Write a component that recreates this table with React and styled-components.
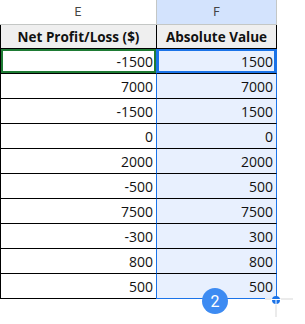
import React from 'react';
import styled, { createGlobalStyle } from 'styled-components';

const rows = [
  [-1500, 1500],
  [7000, 7000],
  [-1500, 1500],
  [0, 0],
  [2000, 2000],
  [-500, 500],
  [7500, 7500],
  [-300, 300],
  [800, 800],
  [500, 500],
];

const Global = createGlobalStyle`
  body {
    margin: 0;
    background: #fff;
  }
`;

const Sheet = styled.div`
  position: relative;
  width: 305px;
  height: 324px;
  overflow: hidden;
  font-family: "Open Sans", "Noto Sans", sans-serif;
`;

const Grid = styled.div`
  display: grid;
  grid-template-columns: 157px 120px;
  grid-template-rows: 25px 24px repeat(10, 25px);
`;

const Letter = styled.div`
  display: flex;
  align-items: center;
  justify-content: center;
  font-family: Roboto, "Noto Sans", sans-serif;
  font-size: 12px;
  color: #444;
  background: ${p => (p.$active ? '#d3e3fd' : '#fff')};
  border-bottom: 1px solid #c4c7c5;
  border-right: 1px solid #c4c7c5;
`;

const Head = styled.div`
  display: flex;
  align-items: center;
  justify-content: center;
  background: #efefef;
  font-weight: 700;
  font-size: 13.5px;
  color: #111;
  border-right: 1px solid #000;
  border-bottom: 1px solid #000;
  ${p => p.$first && 'border-left: 1px solid #000;'}
`;

const Cell = styled.div`
  position: relative;
  display: flex;
  align-items: center;
  justify-content: flex-end;
  padding-right: 3px;
  font-size: 14px;
  color: #111;
  background: ${p => (p.$sel ? '#e8f0fe' : '#fff')};
  border-bottom: 1px solid #000;
  border-right: 1px solid ${p => (p.$sel ? '#1a73e8' : '#000')};
  ${p => p.$first && 'border-left: 1px solid #000;'}
  ${p => p.$sel && 'border-left: 1px solid #1a73e8; margin-left: -1px;'}
  ${p => p.$sel && p.$last && 'border-bottom-color: #1a73e8;'}
  ${p => p.$focus && `box-shadow: inset 0 0 0 2px ${p.$focus};`}
`;

const Badge = styled.div`
  position: absolute;
  left: 202px;
  top: 288px;
  width: 26px;
  height: 26px;
  border-radius: 50%;
  background: #3d8bf2;
  color: #fff;
  font-family: Roboto, "Noto Sans", sans-serif;
  font-size: 16px;
  display: flex;
  align-items: center;
  justify-content: center;
`;

const Handle = styled.svg`
  position: absolute;
  left: 260px;
  top: 284px;
`;

export default function App() {
  return (
    <Sheet>
      <Global />
      <Grid>
        <Letter>E</Letter>
        <Letter $active>F</Letter>
        <Head $first>Net Profit/Loss ($)</Head>
        <Head>Absolute Value</Head>
        {rows.map(([a, b], i) => (
          <React.Fragment key={i}>
            <Cell $first $focus={i === 0 ? '#1e7b34' : null}>{a}</Cell>
            <Cell $sel $last={i === rows.length - 1} $focus={i === 0 ? '#1a73e8' : null}>{b}</Cell>
          </React.Fragment>
        ))}
      </Grid>
      <Badge>2</Badge>
      <Handle width="40" height="36" viewBox="0 0 40 36">
        <line x1="5" y1="15" x2="33" y2="15" stroke="#ebebeb" strokeWidth="2" />
        <line x1="16" y1="15" x2="16" y2="33" stroke="#ebebeb" strokeWidth="2" />
        <circle cx="16" cy="16" r="4" fill="#1a73e8" />
        <line x1="11" y1="15.5" x2="21" y2="15.5" stroke="#fff" strokeWidth="1" />
        <line x1="16" y1="16" x2="16" y2="21" stroke="#fff" strokeWidth="1" />
      </Handle>
    </Sheet>
  );
}
